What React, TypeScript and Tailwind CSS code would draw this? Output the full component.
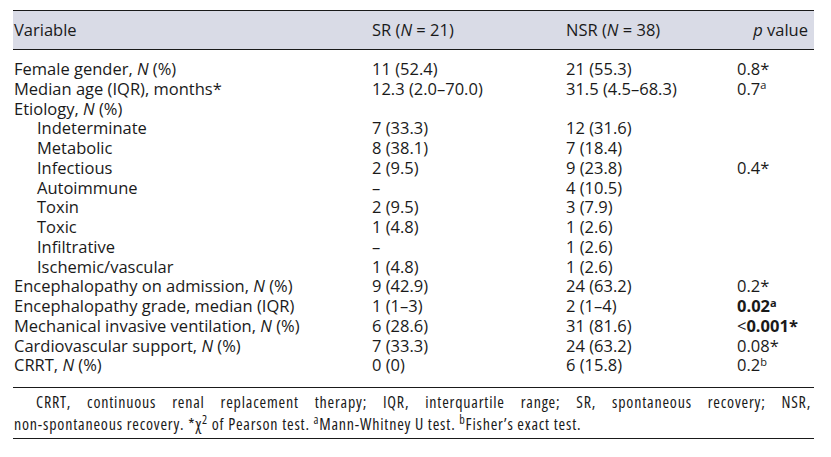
import React from "react";

type Row = {
  label: React.ReactNode;
  sr: string;
  nsr: string;
  p?: React.ReactNode;
  sub?: boolean;
};

const N = () => <i>N</i>;

const rows: Row[] = [
  { label: <>Female gender, <N /> (%)</>, sr: "11 (52.4)", nsr: "21 (55.3)", p: <>0.8*</> },
  { label: <>Median age (IQR), months*</>, sr: "12.3 (2.0–70.0)", nsr: "31.5 (4.5–68.3)", p: <>0.7<sup className="text-[11px]">a</sup></> },
  { label: <>Etiology, <N /> (%)</>, sr: "", nsr: "" },
  { label: "Indeterminate", sr: "7 (33.3)", nsr: "12 (31.6)", sub: true },
  { label: "Metabolic", sr: "8 (38.1)", nsr: "7 (18.4)", sub: true },
  { label: "Infectious", sr: "2 (9.5)", nsr: "9 (23.8)", p: <>0.4*</>, sub: true },
  { label: "Autoimmune", sr: "–", nsr: "4 (10.5)", sub: true },
  { label: "Toxin", sr: "2 (9.5)", nsr: "3 (7.9)", sub: true },
  { label: "Toxic", sr: "1 (4.8)", nsr: "1 (2.6)", sub: true },
  { label: "Infiltrative", sr: "–", nsr: "1 (2.6)", sub: true },
  { label: "Ischemic/vascular", sr: "1 (4.8)", nsr: "1 (2.6)", sub: true },
  { label: <>Encephalopathy on admission, <N /> (%)</>, sr: "9 (42.9)", nsr: "24 (63.2)", p: <>0.2*</> },
  { label: <>Encephalopathy grade, median (IQR)</>, sr: "1 (1–3)", nsr: "2 (1–4)", p: <b>0.02<sup className="text-[11px]">a</sup></b> },
  { label: <>Mechanical invasive ventilation, <N /> (%)</>, sr: "6 (28.6)", nsr: "31 (81.6)", p: <>&lt;<b>0.001*</b></> },
  { label: <>Cardiovascular support, <N /> (%)</>, sr: "7 (33.3)", nsr: "24 (63.2)", p: <>0.08*</> },
  { label: <>CRRT, <N /> (%)</>, sr: "0 (0)", nsr: "6 (15.8)", p: <>0.2<sup className="text-[11px]">b</sup></> },
];

export default function App() {
  return (
    <div className="w-[831px] h-[457px] bg-white pt-[10px] pl-[13px] text-[#1a1a1a] font-['Open_Sans',sans-serif] text-[16.5px] leading-[19.75px]">
      <div className="w-[801px]">
        <div className="grid grid-cols-[358px_194px_171px_1fr] h-[40px] items-center bg-[#d9dbe6] border-y border-[#1a1a1a] pl-px pr-[6px]">
          <div>Variable</div>
          <div>SR (<i>N</i> = 21)</div>
          <div>NSR (<i>N</i> = 38)</div>
          <div className="text-right"><i>p</i> value</div>
        </div>
        <div className="pt-[9px] pb-[12px] border-b border-[#1a1a1a] pl-px">
          {rows.map((r, i) => (
            <div key={i} className="grid grid-cols-[358px_194px_171px_1fr] whitespace-nowrap">
              <div className={r.sub ? "pl-[23px]" : ""}>{r.label}</div>
              <div>{r.sr}</div>
              <div>{r.nsr}</div>
              <div>{r.p}</div>
            </div>
          ))}
        </div>
        <div className="border-b border-[#1a1a1a] pt-[3px] pb-[3px] pl-px pr-[3px] text-[16px] leading-[22px] [font-stretch:75%] tracking-[0.8px]">
          <p className="pl-[22px] text-justify [text-align-last:justify]">
            CRRT, continuous renal replacement therapy; IQR, interquartile range; SR, spontaneous recovery; NSR,
          </p>
          <p>
            non-spontaneous recovery. *χ<sup className="text-[12px]">2</sup> of Pearson test. <sup className="text-[12px]">a</sup>Mann-Whitney U test. <sup className="text-[12px]">b</sup>Fisher’s exact test.
          </p>
        </div>
      </div>
    </div>
  );
}
